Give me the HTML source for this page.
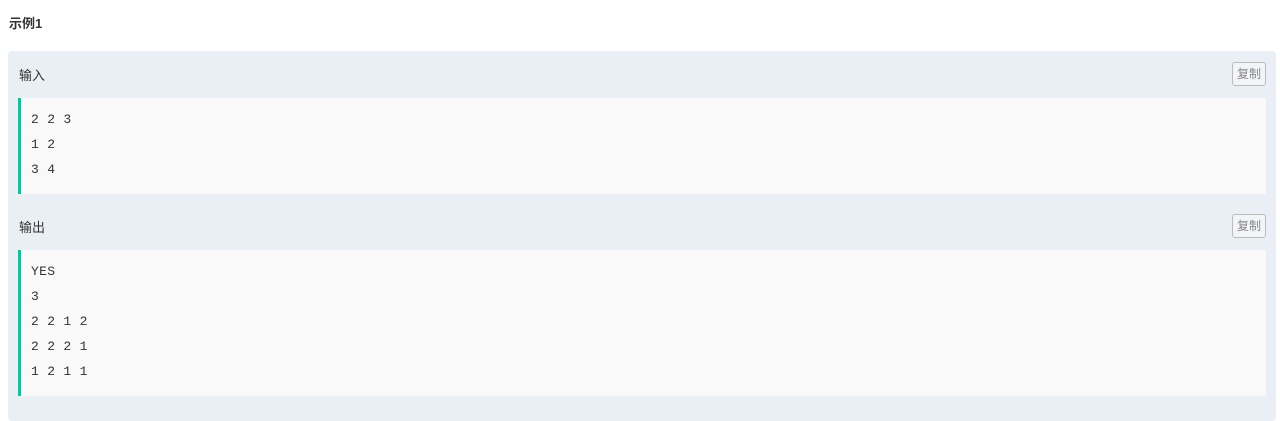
<!DOCTYPE html>
<html><head><meta charset="utf-8"><style>
html,body{margin:0;height:410px;overflow:hidden;background:#fff;font-family:"Liberation Sans","Noto Sans CJK SC",sans-serif;color:#333;}
.title{position:absolute;left:9px;top:13px;font-size:13px;font-weight:bold;color:#333;}
.box{position:absolute;left:8px;top:51px;width:1268px;height:370px;background:#eaeef5;border-radius:4px;}
.hd{position:absolute;left:11px;font-size:13px;color:#333;}
.btn{position:absolute;right:10px;width:34px;height:24px;border:1px solid #bbb;border-radius:3px;font-size:12px;color:#888;text-align:center;line-height:22px;box-sizing:border-box;background:#f2f4f8}
.code{position:absolute;left:10px;width:1248px;background:#f9f9f9;border-left:3px solid #1abc9c;box-sizing:border-box;padding:9px 0 0 10px;font-family:"Liberation Mono",monospace;font-size:13px;letter-spacing:0.3px;line-height:25px;color:#333;white-space:pre;}
</style></head><body>
<div class="title">示例1</div>
<div class="box">
<div class="hd" style="top:14px">输入</div>
<div class="btn" style="top:11px">复制</div>
<div class="code" style="top:47px;height:96px">2 2 3
1 2
3 4</div>
<div class="hd" style="top:166px">输出</div>
<div class="btn" style="top:163px">复制</div>
<div class="code" style="top:199px;height:146px">YES
3
2 2 1 2
2 2 2 1
1 2 1 1</div>
</div>
</body></html>
